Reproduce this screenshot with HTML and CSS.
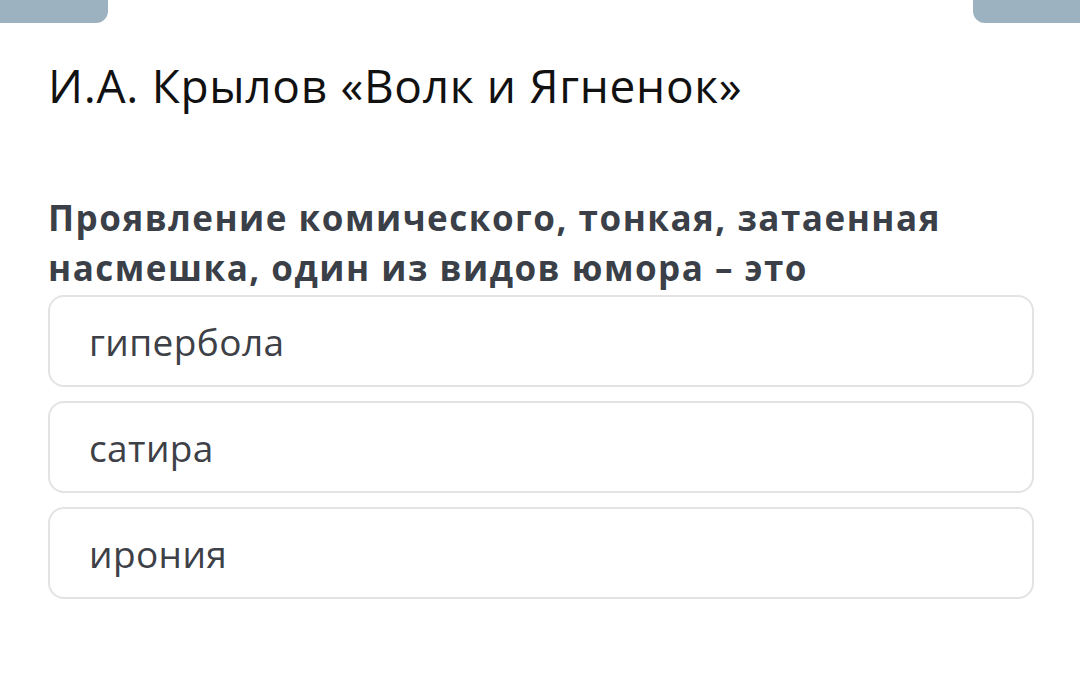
FILE: index.html
```html
<!DOCTYPE html>
<html lang="ru">
<head>
<meta charset="utf-8">
<link rel="stylesheet" href="styles.css">
</head>
<body>
<div class="tabs">
  <div class="tab tab-left"></div>
  <div class="tab tab-right"></div>
</div>
<main class="content">
  <h1 class="title">И.А. Крылов «Волк и Ягненок»</h1>
  <p class="question">Проявление комического, тонкая, затаенная насмешка, один из видов юмора – это</p>
  <div class="options">
    <div class="option">гипербола</div>
    <div class="option">сатира</div>
    <div class="option">ирония</div>
  </div>
</main>
</body>
</html>
```
FILE: styles.css
```css
* { box-sizing: border-box; }
html, body {
  margin: 0;
  padding: 0;
  background: #ffffff;
  font-family: "Open Sans", "Noto Sans", sans-serif;
}
.tabs {
  display: flex;
  justify-content: space-between;
  height: 23px;
}
.tab {
  width: 108px;
  height: 23px;
  background: #9db2c0;
}
.tab-left { border-bottom-right-radius: 12px; }
.tab-right { width: 107px; border-bottom-left-radius: 12px; }
.content {
  padding: 0 46px 0 48px;
}
.title {
  margin: 33px 0 0 0;
  font-size: 46px;
  font-weight: 400;
  line-height: 58px;
  color: #111111;
  letter-spacing: 0.7px;
}
.question {
  margin: 79px 0 0 0;
  font-size: 35px;
  font-weight: 700;
  line-height: 50px;
  color: #3a3f48;
  letter-spacing: 1.5px;
  width: 960px;
}
.options {
  display: flex;
  flex-direction: column;
  gap: 14px;
  margin-top: 2px;
}
.option {
  height: 92px;
  border: 2px solid #e3e3e3;
  border-radius: 16px;
  padding: 0 0 0 39px;
  display: flex;
  align-items: center;
  font-size: 37px;
  letter-spacing: 0.4px;
  color: #3d4046;
}
```
